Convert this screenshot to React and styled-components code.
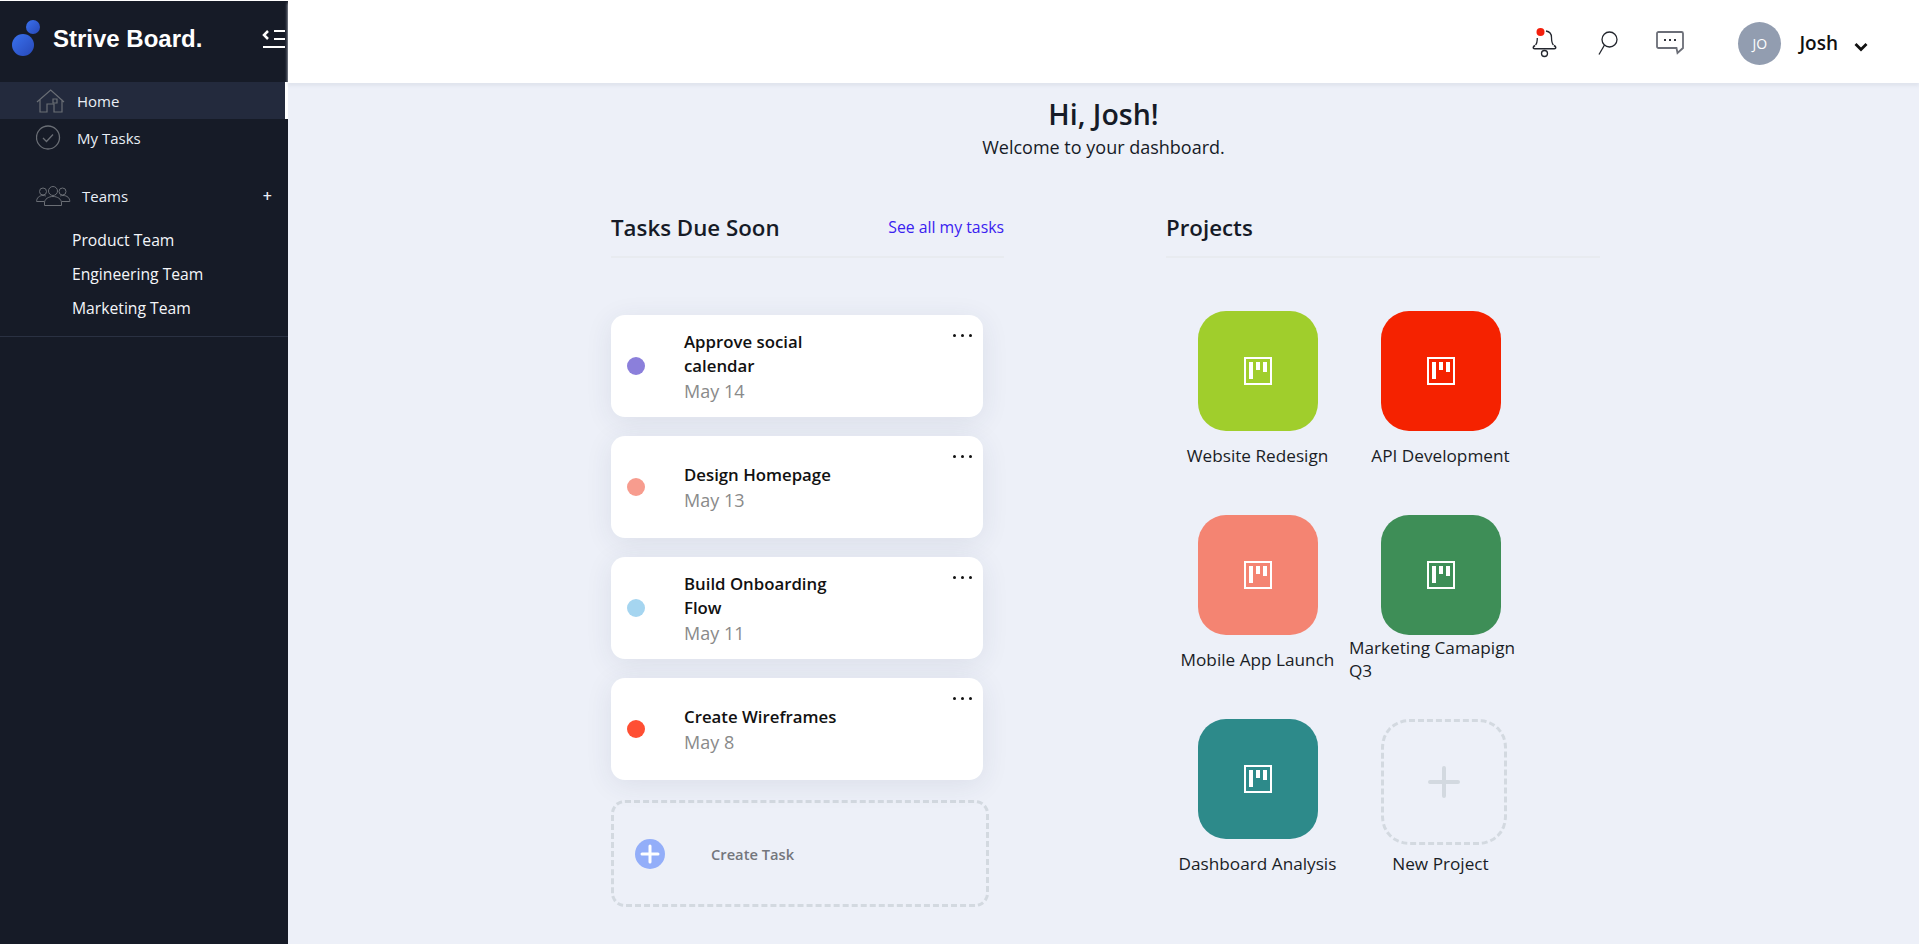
import React from 'react';
import styled, { createGlobalStyle } from 'styled-components';

const GlobalStyle = createGlobalStyle`
    * { box-sizing: border-box; }
    html, body { margin: 0; padding: 0; height: 100%; }
    body {
        font-family: "Open Sans", "Noto Sans", sans-serif;
        background: #edf0f8;
        overflow: hidden;
    }
`;

const Layout = styled.div`
    display: flex;
    height: 100vh;
`;

const Sidebar = styled.aside`
    width: 288px;
    flex-shrink: 0;
    background: #161b27;
    border-top: 1px solid #fff;
    color: #fff;
`;

const Brand = styled.div`
    height: 81px;
    display: flex;
    align-items: center;
    padding: 0 3px 6px 12px;
`;

const BrandName = styled.div`
    font-family: "Liberation Sans", Arial, sans-serif;
    font-weight: 700;
    font-size: 24px;
    margin-left: 11px;
    flex: 1;
    white-space: nowrap;
`;

const CollapseSlot = styled.span`
    display: flex;
    margin-top: 1px;
`;

const NavRow = styled.div`
    height: 37px;
    display: flex;
    align-items: center;
    padding-left: 36px;
    font-size: 15px;
    color: #e9eef5;
    background: ${props => props.active ? '#232a3d' : 'transparent'};
    border-right: 3px solid ${props => props.active ? '#fff' : 'transparent'};
`;

const NavIcon = styled.span`
    display: flex;
    width: ${props => props.width || 41}px;
`;

const TeamsRow = styled(NavRow)`
    margin-top: 21px;
    padding-right: 13px;
`;

const Plus = styled.span`
    margin-left: auto;
    font-size: 16px;
    font-weight: 600;
`;

const TeamList = styled.div`
    padding: 9px 0 11px 72px;
    border-bottom: 1px solid #2a3142;
`;

const TeamItem = styled.div`
    height: 34px;
    line-height: 34px;
    font-size: 15.7px;
    color: #f4f6fa;
`;

const Main = styled.main`
    flex: 1;
    min-width: 0;
`;

const Topbar = styled.header`
    height: 83px;
    background: #fff;
    box-shadow: 0 3px 3px #e0e4ee;
    display: flex;
    align-items: center;
    justify-content: flex-end;
    padding: 3px 51px 0 0;
`;

const TopIcon = styled.span`
    display: flex;
    margin-left: ${props => props.gap}px;
    margin-top: ${props => props.drop || 0}px;
`;

const Avatar = styled.div`
    width: 43px;
    height: 43px;
    border-radius: 50%;
    background: #929db0;
    color: #fff;
    font-size: 14px;
    display: flex;
    align-items: center;
    justify-content: center;
    margin-left: 54px;
`;

const UserName = styled.div`
    margin-left: 18px;
    font-size: 19px;
    font-weight: 600;
    color: #111;
`;

const Greeting = styled.div`
    text-align: center;
    color: #161b27;
    padding-top: 13px;
`;

const Hi = styled.h1`
    margin: 0;
    font-size: 28.5px;
    font-weight: 600;
    line-height: 36px;
`;

const Welcome = styled.p`
    margin: 3px 0 0;
    font-size: 18px;
    line-height: 25px;
`;

const Columns = styled.div`
    display: flex;
    padding: 46px 0 0 323px;
`;

const TasksColumn = styled.section`
    width: 393px;
`;

const ProjectsColumn = styled.section`
    width: 434px;
    margin-left: 162px;
`;

const SectionHead = styled.div`
    height: 52px;
    display: flex;
    align-items: center;
    justify-content: space-between;
    border-bottom: 2px solid #e8ebf0;
    padding-bottom: 8px;
`;

const SectionTitle = styled.h2`
    margin: 0;
    font-size: 22.3px;
    font-weight: 600;
    color: #161b27;
`;

const SeeAll = styled.a`
    font-size: 15.8px;
    color: #3a22f0;
`;

const TaskList = styled.div`
    display: flex;
    flex-direction: column;
    gap: 19px;
    margin-top: 57px;
`;

const TaskCard = styled.div`
    position: relative;
    width: 372px;
    height: 102px;
    background: #fff;
    border-radius: 14px;
    box-shadow: 0 5px 28px rgba(40, 50, 90, 0.09);
    display: flex;
    align-items: center;
    padding-left: 16px;
`;

const Dot = styled.span`
    width: 18px;
    height: 18px;
    margin-top: -1px;
    border-radius: 50%;
    background: ${props => props.color};
    flex-shrink: 0;
`;

const TaskText = styled.div`
    margin: 2px 0 0 39px;
    width: 165px;
`;

const TaskTitle = styled.div`
    font-size: 16.8px;
    font-weight: 600;
    line-height: 24px;
    color: #111;
`;

const TaskDate = styled.div`
    font-size: 18px;
    line-height: 26px;
    color: #8a8a8a;
`;

const Dots = styled.span`
    position: absolute;
    top: 19px;
    right: 11px;
    display: flex;
    gap: 5px;

    i {
        width: 3px;
        height: 3px;
        border-radius: 50%;
        background: #111;
    }
`;

const CreateTask = styled.div`
    width: 378px;
    height: 107px;
    margin-top: 20px;
    border: 3px dashed #d3d9e0;
    border-radius: 14px;
    display: flex;
    align-items: center;
    padding-left: 21px;
`;

const CreateCircle = styled.span`
    width: 30px;
    height: 30px;
    border-radius: 50%;
    background: #93aef9;
    display: flex;
    align-items: center;
    justify-content: center;
`;

const CreateLabel = styled.span`
    margin-left: 46px;
    font-size: 14.7px;
    font-weight: 600;
    color: #74767c;
`;

const ProjectGrid = styled.div`
    display: grid;
    grid-template-columns: 183px 183px;
    grid-auto-rows: 204px;
    margin-top: 53px;
`;

const ProjectCell = styled.div`
    display: flex;
    flex-direction: column;
    align-items: center;
`;

const Tile = styled.div`
    width: 120px;
    height: 120px;
    flex-shrink: 0;
    border-radius: 28px;
    background: ${props => props.color};
    display: flex;
    align-items: center;
    justify-content: center;
`;

const NewTile = styled.div`
    width: 126px;
    height: 126px;
    flex-shrink: 0;
    margin: 0 -6px -6px 0;
    border: 3px dashed #d3d9e0;
    border-radius: 28px;
    display: flex;
    align-items: center;
    justify-content: center;
`;

const LabelSlot = styled.div`
    height: 24px;
    margin-top: 12px;
    display: flex;
    align-items: center;
`;

const ProjectLabel = styled.div`
    font-size: 17.2px;
    line-height: 23px;
    color: #1a1d26;
`;

const HomeIcon = () => (
    <svg width="29" height="24" viewBox="0 0 29 24" fill="none" stroke="#6a6e75" strokeWidth="1.2">
        <path d="M1 13 14.7 1 28 13M4 10.500V23h7v-8h7v8h8V10.500" />
        <path d="M17 10h4v4h-4z" />
    </svg>
);

const CheckIcon = () => (
    <svg width="25" height="25" viewBox="0 0 25 25" fill="none" stroke="#6a6e75" strokeWidth="1.3">
        <circle cx="12" cy="12.500" r="11.500" />
        <path d="m7 13 3.500 3.500L17 9.500" />
    </svg>
);

const TeamsIcon = () => (
    <svg width="35" height="20" viewBox="0 0 35 20" fill="none" stroke="#6a6e75" strokeWidth="1">
        <circle cx="17" cy="5" r="4.500" />
        <circle cx="7" cy="5.500" r="3.500" />
        <circle cx="26.500" cy="5.500" r="3.500" />
        <path d="M8.500 19.500v-2.500c0-4 4-6.500 8.500-6.500s8.500 2.500 8.500 6.500v2.500z" />
        <path d="M8.500 15.500H.6c0-3.500 2.500-6 6.400-6 1 0 2 .2 2.800.5M25.500 15.500h8.300c0-3.500-2.500-6-6.800-6-1 0-2 .2-2.800.5" />
    </svg>
);

const BrandLogo = () => (
    <svg width="30" height="38" viewBox="0 0 30 38">
        <defs>
            <linearGradient id="ball" x1="0" y1="0" x2="1" y2="1">
                <stop offset="0" stopColor="#3a72ef" />
                <stop offset="1" stopColor="#2748b8" />
            </linearGradient>
        </defs>
        <circle cx="21" cy="7" r="7" fill="url(#ball)" />
        <circle cx="11" cy="25" r="11" fill="url(#ball)" />
    </svg>
);

const CollapseIcon = () => (
    <svg width="23" height="20" viewBox="0 0 23 20" fill="none" stroke="#fff" strokeWidth="2.200">
        <path d="M6 2 2 6l4 4" strokeWidth="2.500" />
        <path d="M12 2h11M12 10h11M1 18h22" />
    </svg>
);

const BellIcon = () => (
    <svg width="25" height="30" viewBox="0 0 25 30" fill="none" stroke="#23262e" strokeWidth="1.300">
        <path d="M14 3c3.500.5 5.500 3 5.500 6.500 0 3 .5 6 2 7.500M5.300 10c0 3-.6 5.700-1.800 7" />
        <path d="M3 17.500c-1.500 1-2 2-1.500 2.700.3.400.8.500 1.400.500h19.200c.6 0 1.100-.1 1.400-.5.500-.7 0-1.700-1.500-2.700" strokeWidth="1.600" />
        <circle cx="12.500" cy="25.500" r="3" />
        <circle cx="8.500" cy="4" r="4" fill="#f41f0c" stroke="none" />
    </svg>
);

const SearchIcon = () => (
    <svg width="20" height="24" viewBox="0 0 20 24" fill="none" stroke="#23262e" strokeWidth="1.300">
        <circle cx="11.500" cy="8.500" r="7.500" />
        <path d="M6.500 14 1 23.500" />
    </svg>
);

const ChatIcon = () => (
    <svg width="28" height="24" viewBox="0 0 28 24" fill="none" stroke="#6b6e77" strokeWidth="1.800">
        <path d="M2.500 1h23c.8 0 1.500.700 1.500 1.500V17l-5.500 5-1-5H2.500c-.8 0-1.500-.700-1.500-1.500v-13C1 1.700 1.700 1 2.500 1z" />
        <path d="M8 9h2M13 9h2M18 9h2" stroke="#33363f" strokeWidth="2" />
    </svg>
);

const Chevron = () => (
    <svg width="14" height="10" viewBox="0 0 14 10" fill="none" stroke="#111" strokeWidth="2.800">
        <path d="m1.500 2 5.500 5.500L12.500 2" />
    </svg>
);

const BoardIcon = () => (
    <svg width="28" height="28" viewBox="0 0 28 28" fill="#fff">
        <path d="M0 0h28v28H0zM2 2v24h24V2z" fillRule="evenodd" />
        <path d="M5 5h4v17H5zM12 5h4v8h-4zM19 5h4v10h-4z" />
    </svg>
);

const tasks = [
    { title: 'Approve social calendar', date: 'May 14', color: '#8b7fdb' },
    { title: 'Design Homepage', date: 'May 13', color: '#f79c8e' },
    { title: 'Build Onboarding Flow', date: 'May 11', color: '#a5d5f0' },
    { title: 'Create Wireframes', date: 'May 8', color: '#ff4f33' },
];

const projects = [
    { name: 'Website Redesign', color: '#a0ce2c' },
    { name: 'API Development', color: '#f52200' },
    { name: 'Mobile App Launch', color: '#f48472' },
    { name: 'Marketing Camapign Q3', color: '#3e8e57' },
    { name: 'Dashboard Analysis', color: '#2d8a8a' },
];

const App = () => {
    return (
        <Layout>
            <GlobalStyle />
            <Sidebar>
                <Brand>
                    <BrandLogo />
                    <BrandName>Strive Board.</BrandName>
                    <CollapseSlot><CollapseIcon /></CollapseSlot>
                </Brand>
                <NavRow active>
                    <NavIcon><HomeIcon /></NavIcon>
                    Home
                </NavRow>
                <NavRow>
                    <NavIcon><CheckIcon /></NavIcon>
                    My Tasks
                </NavRow>
                <TeamsRow>
                    <NavIcon width={46}><TeamsIcon /></NavIcon>
                    Teams
                    <Plus>+</Plus>
                </TeamsRow>
                <TeamList>
                    <TeamItem>Product Team</TeamItem>
                    <TeamItem>Engineering Team</TeamItem>
                    <TeamItem>Marketing Team</TeamItem>
                </TeamList>
            </Sidebar>
            <Main>
                <Topbar>
                    <TopIcon gap={0}><BellIcon /></TopIcon>
                    <TopIcon gap={41}><SearchIcon /></TopIcon>
                    <TopIcon gap={38}><ChatIcon /></TopIcon>
                    <Avatar>JO</Avatar>
                    <UserName>Josh</UserName>
                    <TopIcon gap={16} drop={8}><Chevron /></TopIcon>
                </Topbar>
                <Greeting>
                    <Hi>Hi, Josh!</Hi>
                    <Welcome>Welcome to your dashboard.</Welcome>
                </Greeting>
                <Columns>
                    <TasksColumn>
                        <SectionHead>
                            <SectionTitle>Tasks Due Soon</SectionTitle>
                            <SeeAll>See all my tasks</SeeAll>
                        </SectionHead>
                        <TaskList>
                            {tasks.map(task => (
                                <TaskCard key={task.title}>
                                    <Dot color={task.color} />
                                    <TaskText>
                                        <TaskTitle>{task.title}</TaskTitle>
                                        <TaskDate>{task.date}</TaskDate>
                                    </TaskText>
                                    <Dots><i /><i /><i /></Dots>
                                </TaskCard>
                            ))}
                        </TaskList>
                        <CreateTask>
                            <CreateCircle>
                                <svg width="20" height="20" viewBox="0 0 20 20" stroke="#fff" strokeWidth="3" strokeLinecap="round">
                                    <path d="M10 2v16M2 10h16" />
                                </svg>
                            </CreateCircle>
                            <CreateLabel>Create Task</CreateLabel>
                        </CreateTask>
                    </TasksColumn>
                    <ProjectsColumn>
                        <SectionHead>
                            <SectionTitle>Projects</SectionTitle>
                        </SectionHead>
                        <ProjectGrid>
                            {projects.map(project => (
                                <ProjectCell key={project.name}>
                                    <Tile color={project.color}><BoardIcon /></Tile>
                                    <LabelSlot><ProjectLabel>{project.name}</ProjectLabel></LabelSlot>
                                </ProjectCell>
                            ))}
                            <ProjectCell>
                                <NewTile>
                                    <svg width="32" height="32" viewBox="0 0 32 32" stroke="#d3d9e0" strokeWidth="4" strokeLinecap="round">
                                        <path d="M16 2v28M2 16h28" />
                                    </svg>
                                </NewTile>
                                <LabelSlot><ProjectLabel>New Project</ProjectLabel></LabelSlot>
                            </ProjectCell>
                        </ProjectGrid>
                    </ProjectsColumn>
                </Columns>
            </Main>
        </Layout>
    );
};

export default App;
